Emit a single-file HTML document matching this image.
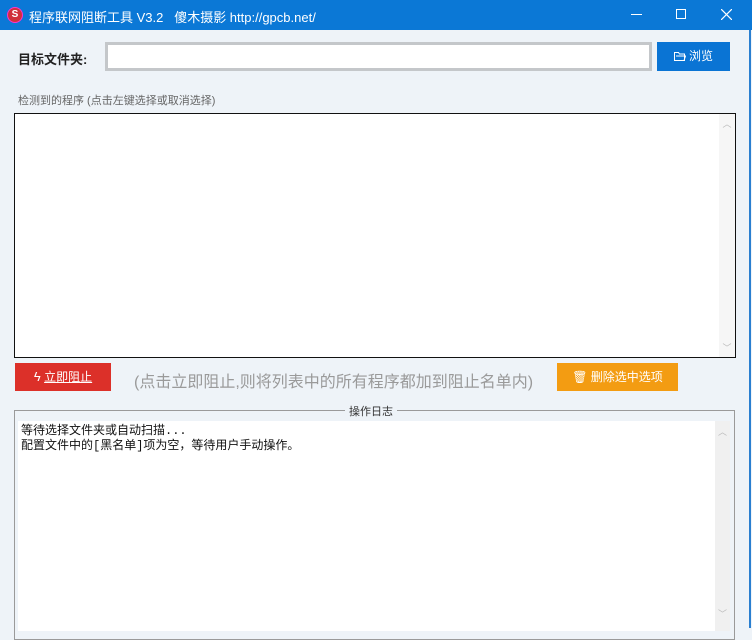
<!DOCTYPE html>
<html><head><meta charset="utf-8"><style>
*{margin:0;padding:0;box-sizing:border-box}
body{width:752px;height:628px;background:#eef3f8;position:relative;overflow:hidden;font-family:"Liberation Sans","Noto Sans CJK SC",sans-serif}
.a{position:absolute}
#tb{left:0;top:0;width:752px;height:30px;background:#0b78d6;color:#fff;font-size:13px}
</style></head><body>
<div id="tb" class="a">
 <div class="a" style="left:7px;top:7px;width:16px;height:16px;border-radius:50%;background:#d0303a;border:1px solid #f3c;color:#fff;font-size:10px;font-weight:bold;text-align:center;line-height:14px">S</div>
 <div class="a" style="left:29px;top:7px;white-space:nowrap">程序联网阻断工具 V3.2 &nbsp;&nbsp;傻木摄影 http://gpcb.net/</div>
 <div class="a" style="left:631px;top:14px;width:11px;height:1px;background:#fff"></div>
 <div class="a" style="left:676px;top:9px;width:10px;height:10px;border:1px solid #fff"></div>
 <svg class="a" style="left:721px;top:9px" width="11" height="11"><path d="M0 0L11 11M11 0L0 11" stroke="#fff" stroke-width="1.2"/></svg>
</div>
<div class="a" style="left:749px;top:30px;width:2px;height:598px;background:#2a7fd0"></div>
<div class="a" style="left:18px;top:49px;font-size:13px;font-weight:bold;color:#222">目标文件夹:</div>
<div class="a" style="left:105px;top:42px;width:547px;height:29px;border:3px solid #c4c7ca;background:#fff"></div>
<div class="a" style="left:657px;top:42px;width:73px;height:29px;background:#0a74d4;color:#fff;font-size:12px;line-height:29px;text-align:center">
<svg width="12" height="10" style="vertical-align:-1px;margin-right:3px"><path d="M0.5 1.5h4l1 1.5h5v6.5h-10z M2 5h9.5l-1.5 4.5" fill="none" stroke="#fff" stroke-width="1"/></svg>浏览</div>
<div class="a" style="left:18px;top:92px;font-size:11px;color:#666">检测到的程序 (点击左键选择或取消选择)</div>
<div class="a" style="left:14px;top:113px;width:722px;height:245px;border:1px solid #111;background:#fff">
 <div class="a" style="right:0;top:0;width:16px;height:243px;background:#f6f6f6;color:#bbb;font-size:9px;text-align:center"><div style="margin-top:3px">︿</div><div style="position:absolute;bottom:3px;width:16px">﹀</div></div>
</div>
<div class="a" style="left:15px;top:363px;width:96px;height:28px;background:#dc3029;color:#fff;font-size:12px;line-height:28px;text-align:center"><span style="font-size:13px">ϟ</span> <u>立即阻止</u></div>
<div class="a" style="left:134px;top:368px;font-size:16px;color:#9a9a9a;white-space:nowrap">(点击立即阻止,则将列表中的所有程序都加到阻止名单内)</div>
<div class="a" style="left:557px;top:363px;width:121px;height:28px;background:#f39c12;color:#fff;font-size:12px;line-height:28px;text-align:center">🗑 删除选中选项</div>
<div class="a" style="left:14px;top:410px;width:721px;height:230px;border:1px solid #9a9a9a"></div>
<div class="a" style="left:345px;top:403px;padding:0 4px;background:#eef3f8;font-size:11px;color:#333">操作日志</div>
<div class="a" style="left:18px;top:421px;width:712px;height:210px;background:#fff">
 <div class="a" style="right:0;top:0;width:15px;height:210px;background:#f0f0f0;color:#bbb;font-size:9px;text-align:center"><div style="margin-top:4px">︿</div><div style="position:absolute;top:186px;width:15px">﹀</div></div>
 <div class="a" style="left:3px;top:3px;font-size:12px;line-height:15px;color:#111;font-family:'Liberation Mono','Noto Sans CJK SC',monospace">等待选择文件夹或自动扫描...<br>配置文件中的[黑名单]项为空，等待用户手动操作。</div>
</div>
</body></html>
